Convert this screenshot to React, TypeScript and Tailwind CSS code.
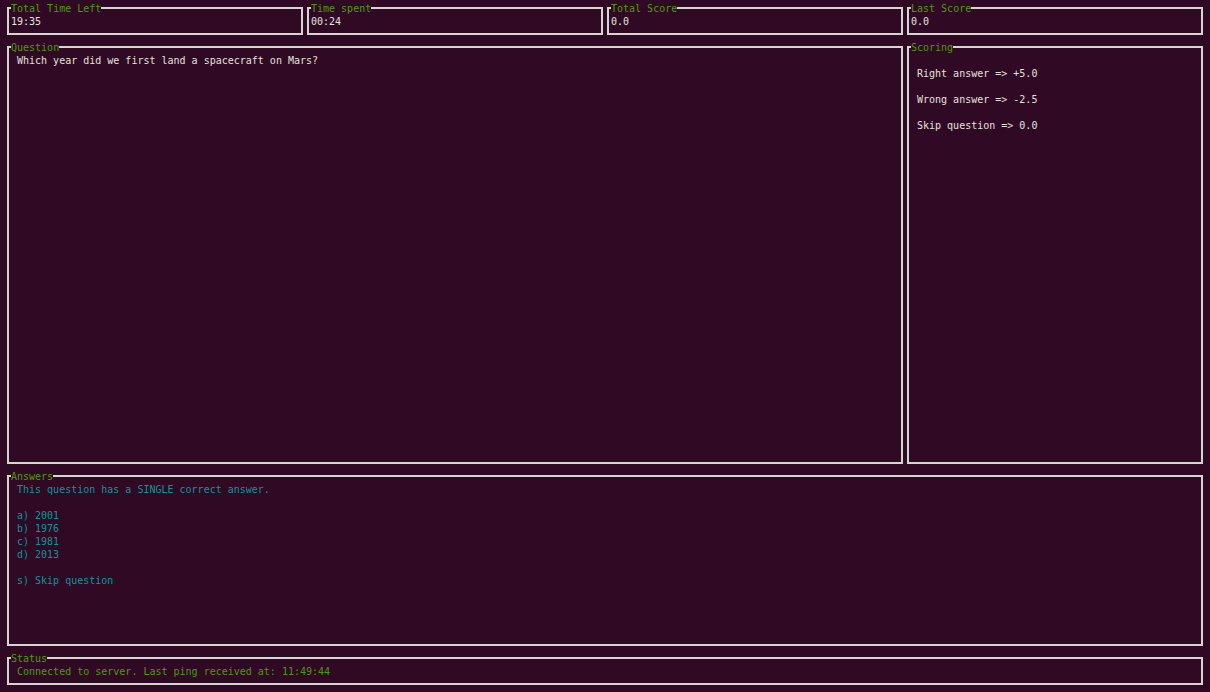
import type { ReactNode } from 'react';

const mono = 'font-["DejaVu_Sans_Mono",monospace] text-[10px] leading-[13px]';

function Box({ title, className = '', children }: { title: string; className?: string; children?: ReactNode }) {
  return (
    <div className={`relative border-2 border-[#d3d7cf] ${className}`}>
      <span className="absolute left-[2px] top-[-7px] bg-[#300a24] text-[#4e9a06] whitespace-pre">{title}</span>
      {children}
    </div>
  );
}

export default function App() {
  const light = 'text-[#e4e1dc]';
  const cyan = 'text-[#06989a]';

  const stats = [
    { title: 'Total Time Left', value: '19:35' },
    { title: 'Time spent', value: '00:24' },
    { title: 'Total Score', value: '0.0' },
    { title: 'Last Score', value: '0.0' },
  ];

  return (
    <div className={`h-screen w-full bg-[#300a24] p-[7px] flex flex-col gap-[11px] ${mono}`}>
      <div className="grid grid-cols-4 gap-1">
        {stats.map((s) => (
          <Box key={s.title} title={s.title} className="h-[28px] pt-[6px] pl-[2px]">
            <div className={`whitespace-pre ${light}`}>{s.value}</div>
          </Box>
        ))}
      </div>

      <div className="grid grid-cols-4 gap-1">
        <Box title="Question" className="col-span-3 h-[418px] pt-[6px] pl-[8px]">
          <div className={`whitespace-pre ${light}`}>Which year did we first land a spacecraft on Mars?</div>
        </Box>
        <Box title="Scoring" className="h-[418px] pt-[6px] pl-[8px]">
          <div className={`whitespace-pre ${light}`}>
            <div>&nbsp;</div>
            <div>Right answer =&gt; +5.0</div>
            <div>&nbsp;</div>
            <div>Wrong answer =&gt; -2.5</div>
            <div>&nbsp;</div>
            <div>Skip question =&gt; 0.0</div>
          </div>
        </Box>
      </div>

      <Box title="Answers" className="h-[171px] pt-[6px] pl-[8px]">
        <div className={`whitespace-pre ${cyan}`}>
          <div>This question has a SINGLE correct answer.</div>
          <div>&nbsp;</div>
          <div>a) 2001</div>
          <div>b) 1976</div>
          <div>c) 1981</div>
          <div>d) 2013</div>
          <div>&nbsp;</div>
          <div>s) Skip question</div>
        </div>
      </Box>

      <Box title="Status" className="h-[28px] pt-[6px] pl-[8px]">
        <div className="whitespace-pre text-[#4e9a06]">Connected to server. Last ping received at: 11:49:44</div>
      </Box>
    </div>
  );
}
